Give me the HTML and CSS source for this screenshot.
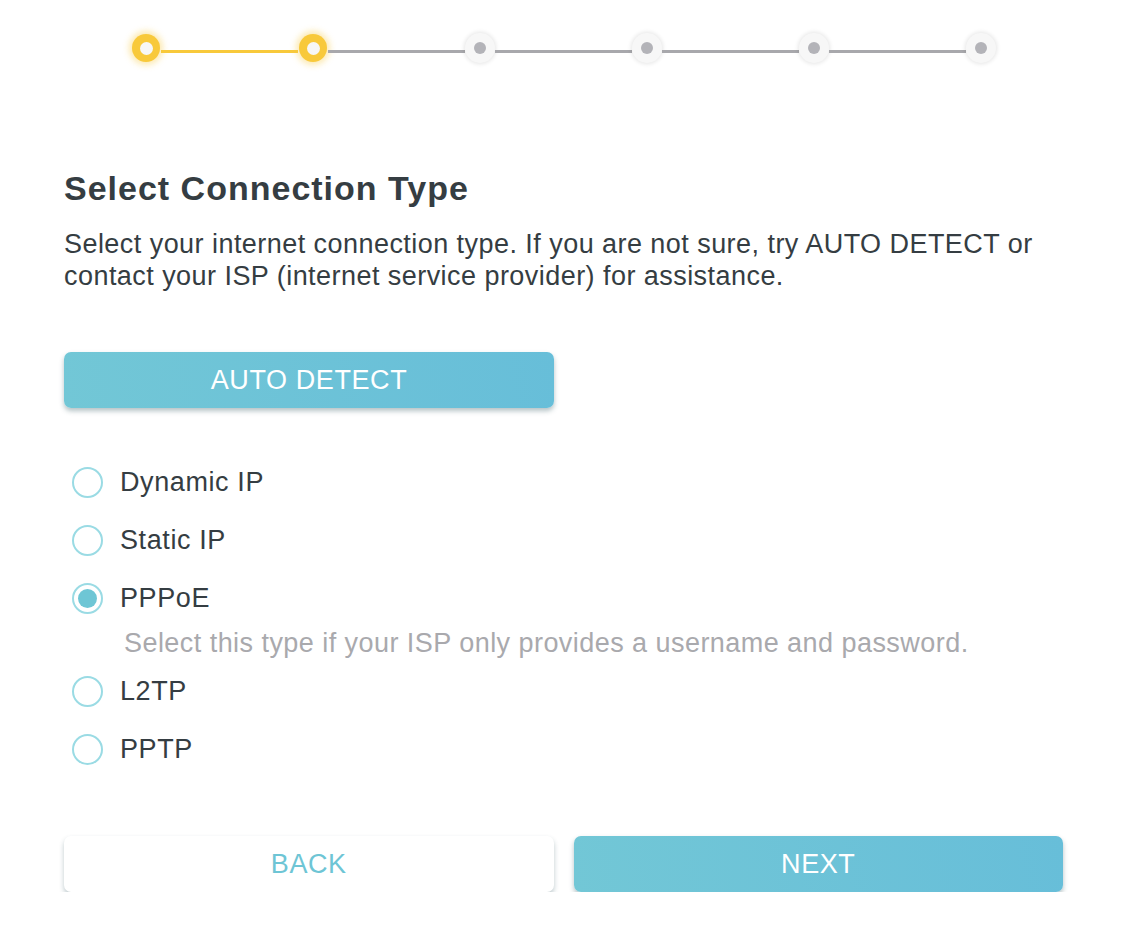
FILE: index.html
```html
<!DOCTYPE html>
<html>
<head>
<meta charset="utf-8">
<link rel="stylesheet" href="styles.css">
</head>
<body>
<div class="page">
  <div class="stepper">
    <span class="dot done"></span><span class="line done"></span>
    <span class="dot done"></span><span class="line"></span>
    <span class="dot"></span><span class="line"></span>
    <span class="dot"></span><span class="line"></span>
    <span class="dot"></span><span class="line"></span>
    <span class="dot"></span>
  </div>
  <h1 class="title">Select Connection Type</h1>
  <p class="desc">Select your internet connection type. If you are not sure, try AUTO DETECT or contact your ISP (internet service provider) for assistance.</p>
  <button class="btn primary auto">AUTO DETECT</button>
  <div class="options">
    <label class="opt"><span class="radio"></span>Dynamic IP</label>
    <label class="opt"><span class="radio"></span>Static IP</label>
    <label class="opt"><span class="radio checked"></span>PPPoE</label>
    <div class="hint">Select this type if your ISP only provides a username and password.</div>
    <label class="opt"><span class="radio"></span>L2TP</label>
    <label class="opt"><span class="radio"></span>PPTP</label>
  </div>
  <div class="actions">
    <button class="btn secondary">BACK</button>
    <button class="btn primary">NEXT</button>
  </div>
</div>
</body>
</html>
```
FILE: styles.css
```css
html, body { margin: 0; padding: 0; background: #fff; }
body { font-family: "Liberation Sans", Arial, Helvetica, sans-serif; color: #353d42; }
.page { width: 999px; padding: 32px 0 0 64px; }
.stepper { display: flex; align-items: center; width: 865px; margin-left: 67px; height: 32px; }
.dot { width: 30px; height: 30px; border-radius: 50%; box-sizing: border-box; flex: none;
  background: #f7f7f7; box-shadow: 0 0 4px 1px rgba(0,0,0,0.10); display: flex; align-items: center; justify-content: center; }
.dot::after { content: ""; width: 12px; height: 12px; border-radius: 50%; background: #b3b3b8; }
.dot.done { width: 28px; height: 28px; margin: 0 1px; background: #f8c93b; box-shadow: 0 0 6px 3px rgba(248,201,59,0.40); }
.dot.done::after { width: 13px; height: 13px; background: #f7f7f7; }
.line { flex: 1; height: 3px; background: #a8a8ac; margin-top: 7px; }
.line.done { background: #f8c93b; }
.title { font-size: 34px; letter-spacing: 1px; font-weight: bold; margin: 104px 0 0; line-height: 40px; color: #353d42; }
.desc { font-size: 27px; letter-spacing: 0.45px; line-height: 32px; margin: 20px 0 0; width: 1000px; color: #353d42; }
.btn { display: block; width: 490px; height: 56px; border: none; border-radius: 7px; font-family: inherit; font-size: 27px; letter-spacing: 0.6px; padding: 0; }
.primary { background: linear-gradient(80deg, #72c7d6, #67bed9); color: #fff; box-shadow: 0 3px 5px rgba(40,80,90,0.35); }
.secondary { background: #fff; color: #6ec5d5; box-shadow: 0 3px 5px rgba(40,80,90,0.30); }
.auto { margin-top: 60px; }
.options { margin-top: 45px; display: flex; flex-direction: column; }
.opt { display: flex; align-items: center; height: 58px; font-size: 27px; letter-spacing: 0.6px; color: #353d42; }
.radio { width: 31px; height: 31px; box-sizing: border-box; border: 2px solid #9adbe4; border-radius: 50%; margin: 0 17px 0 8px; display: flex; align-items: center; justify-content: center; }
.radio.checked::after { content: ""; width: 19px; height: 19px; border-radius: 50%; background: #6ec6d5; }
.hint { font-size: 27px; letter-spacing: 0.45px; color: #a9a9ad; margin: 0 0 3px 60px; line-height: 32px; }
.actions { display: flex; gap: 20px; margin-top: 58px; }
```
